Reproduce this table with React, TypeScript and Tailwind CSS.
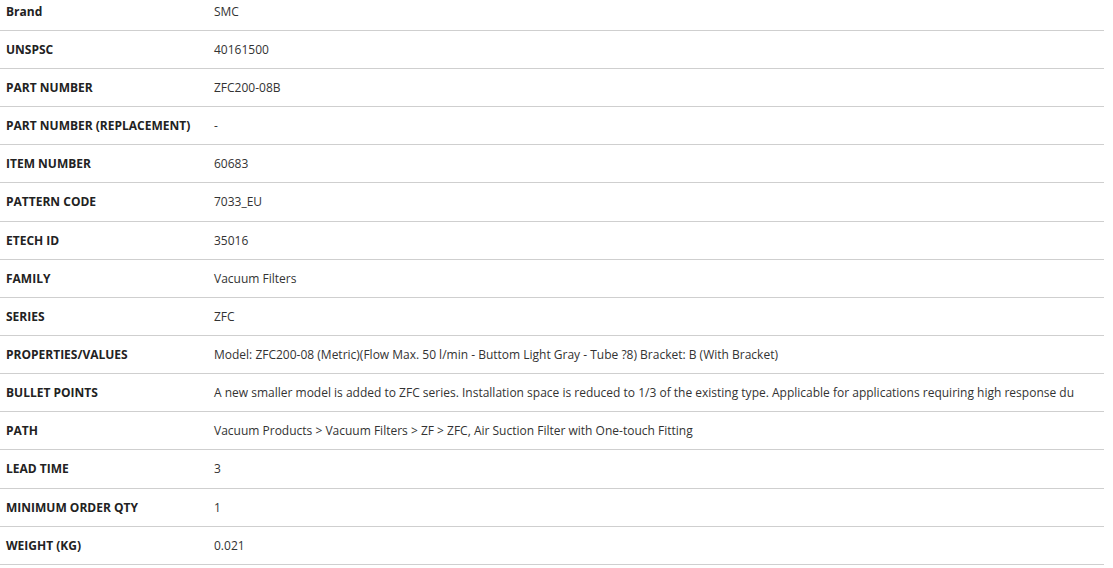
import React from 'react'

type Row = {
  label: string
  value: string
}

const rows: Row[] = [
  { label: 'Brand', value: 'SMC' },
  { label: 'UNSPSC', value: '40161500' },
  { label: 'PART NUMBER', value: 'ZFC200-08B' },
  { label: 'PART NUMBER (REPLACEMENT)', value: '-' },
  { label: 'ITEM NUMBER', value: '60683' },
  { label: 'PATTERN CODE', value: '7033_EU' },
  { label: 'ETECH ID', value: '35016' },
  { label: 'FAMILY', value: 'Vacuum Filters' },
  { label: 'SERIES', value: 'ZFC' },
  {
    label: 'PROPERTIES/VALUES',
    value: 'Model: ZFC200-08 (Metric)(Flow Max. 50 l/min - Buttom Light Gray - Tube ?8) Bracket: B (With Bracket)',
  },
  {
    label: 'BULLET POINTS',
    value:
      'A new smaller model is added to ZFC series. Installation space is reduced to 1/3 of the existing type. Applicable for applications requiring high response du',
  },
  { label: 'PATH', value: 'Vacuum Products > Vacuum Filters > ZF > ZFC, Air Suction Filter with One-touch Fitting' },
  { label: 'LEAD TIME', value: '3' },
  { label: 'MINIMUM ORDER QTY', value: '1' },
  { label: 'WEIGHT (KG)', value: '0.021' },
]

const App = () => {
  return (
    <div className="w-[1113px] h-[568px] overflow-hidden bg-white font-['Open_Sans',sans-serif] text-[12px] leading-[17.14px] text-[#333]">
      <table className="w-[1104px] -mt-[8.3px] border-collapse table-fixed">
        <colgroup>
          <col className="w-[208px]" />
          <col />
        </colgroup>
        <tbody>
          {rows.map((row) => (
            <tr key={row.label} className="border-y border-[#cfcfcf]">
              <td className="py-[10px] px-[6px] font-bold text-[#222] whitespace-nowrap">{row.label}</td>
              <td className="py-[10px] px-[6px] whitespace-nowrap overflow-hidden">{row.value}</td>
            </tr>
          ))}
        </tbody>
      </table>
    </div>
  )
}

export default App
